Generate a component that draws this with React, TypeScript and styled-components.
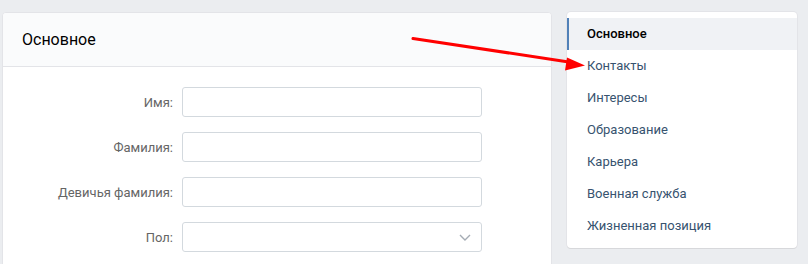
import React from "react";
import styled, { createGlobalStyle } from "styled-components";

const Global = createGlobalStyle`
  html, body { margin: 0; padding: 0; background: #ebedf0; }
  body { font-family: Roboto, "Open Sans", "Liberation Sans", sans-serif; -webkit-font-smoothing: antialiased; }
`;

const Page = styled.div`
  position: relative;
  display: flex;
  align-items: flex-start;
  gap: 15px;
  padding: 12px 0 0 2px;
  width: 808px;
  height: 264px;
  box-sizing: border-box;
  overflow: hidden;
`;

const MainCard = styled.div`
  width: 550px;
  height: 300px;
  box-sizing: border-box;
  background: #fff;
  border: 1px solid #e3e4e8;
  border-radius: 4px;
  overflow: hidden;
`;

const Header = styled.div`
  height: 53px;
  background: #fafbfc;
  border-bottom: 1px solid #e3e4e8;
  display: flex;
  align-items: center;
  padding-left: 19px;
  font-size: 16px;
  color: #000;
`;

const Form = styled.div`
  display: flex;
  flex-direction: column;
  gap: 15px;
  padding-top: 20px;
`;

const Row = styled.div`
  display: grid;
  grid-template-columns: 170px 300px;
  column-gap: 9px;
  align-items: center;
`;

const Label = styled.div`
  text-align: right;
  font-size: 13px;
  color: #656565;
`;

const Field = styled.div`
  position: relative;
  height: 30px;
  box-sizing: border-box;
  border: 1px solid #d3d9de;
  border-radius: 3px;
  background: #fff;
`;

const Chevron = styled.svg`
  position: absolute;
  right: 10px;
  top: 11px;
`;

const Side = styled.div`
  width: 230px;
  box-sizing: border-box;
  background: #fff;
  border-radius: 4px;
  box-shadow: 0 1px 0 0 #d7d8db, 0 0 0 1px #e3e4e8;
  padding: 6px 0;
`;

const MenuItem = styled.div<{ $active?: boolean }>`
  height: 32px;
  box-sizing: border-box;
  padding-bottom: 1px;
  display: flex;
  align-items: center;
  padding-left: ${(p) => (p.$active ? "18px" : "20px")};
  border-left: ${(p) => (p.$active ? "2px solid #5181b8" : "none")};
  background: ${(p) => (p.$active ? "#f0f2f5" : "transparent")};
  font-size: 13px;
  font-weight: ${(p) => (p.$active ? 500 : 400)};
  color: ${(p) => (p.$active ? "#000" : "#37536f")};
`;

const Arrow = styled.svg`
  position: absolute;
  left: 0;
  top: 0;
  pointer-events: none;
`;

const rows: { label: string; select?: boolean }[] = [
  { label: "Имя:" },
  { label: "Фамилия:" },
  { label: "Девичья фамилия:" },
  { label: "Пол:", select: true },
];

const menu = [
  "Основное",
  "Контакты",
  "Интересы",
  "Образование",
  "Карьера",
  "Военная служба",
  "Жизненная позиция",
];

export default function App() {
  return (
    <>
      <Global />
      <Page>
        <MainCard>
          <Header>Основное</Header>
          <Form>
            {rows.map((r) => (
              <Row key={r.label}>
                <Label>{r.label}</Label>
                <Field>
                  {r.select && (
                    <Chevron width="12" height="7" viewBox="0 0 12 7">
                      <path d="M1 1l5 5 5-5" fill="none" stroke="#a5acb4" strokeWidth="1.4" />
                    </Chevron>
                  )}
                </Field>
              </Row>
            ))}
          </Form>
        </MainCard>
        <Side>
          {menu.map((m, i) => (
            <MenuItem key={m} $active={i === 0}>
              {m}
            </MenuItem>
          ))}
        </Side>
        <Arrow width="808" height="264" viewBox="0 0 808 264">
          <line x1="413" y1="38.5" x2="572" y2="62.5" stroke="#f00" strokeWidth="3" strokeLinecap="round" />
          <polygon points="585,65.5 567,57.5 565,70.5" fill="#f00" />
        </Arrow>
      </Page>
    </>
  );
}
